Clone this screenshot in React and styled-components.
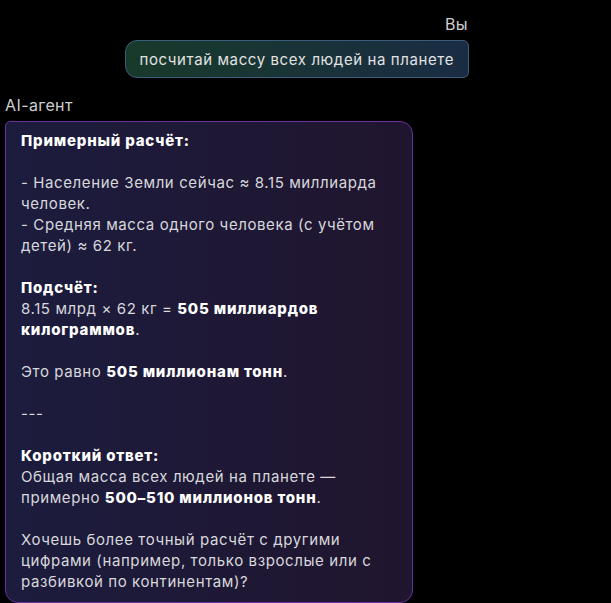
import React from "react";
import styled, { createGlobalStyle } from "styled-components";

const Global = createGlobalStyle`
  html, body { margin: 0; padding: 0; background: #000; }
  body { font-family: Inter, "Noto Sans", sans-serif; color: #dcdcdc; }
`;

const Chat = styled.div`
  width: 464px;
  padding: 14px 0 0 5px;
  display: flex;
  flex-direction: column;
`;

const Message = styled.div`
  display: flex;
  flex-direction: column;
  align-items: ${(p) => (p.$self ? "flex-end" : "flex-start")};
  margin-bottom: ${(p) => (p.$self ? "17px" : "0")};
`;

const Author = styled.div`
  font-size: 16px;
  line-height: 20px;
  letter-spacing: 0.4px;
  color: #cfcfcf;
  margin-bottom: 6px;
  padding-right: ${(p) => (p.$self ? "1px" : "0")};
`;

const UserBubble = styled.div`
  box-sizing: border-box;
  height: 38px;
  padding: 0 14px;
  display: flex;
  align-items: center;
  font-size: 15px;
  letter-spacing: 0.6px;
  color: #e2e2e2;
  border: 1px solid #3d5d7d;
  border-radius: 12px 6px 6px 12px;
  background: linear-gradient(90deg, #183a2a 0%, #1a2c44 100%);
`;

const AgentBubble = styled.div`
  box-sizing: border-box;
  width: 408px;
  padding: 8px 15px 10px 15px;
  font-size: 15px;
  line-height: 21px;
  letter-spacing: 0.6px;
  white-space: pre-wrap;
  color: #d8d8dc;
  border: 1px solid #6a2fa0;
  border-radius: 5px 13px 13px 13px;
  background: linear-gradient(90deg, #1c1c3e 0%, #20152e 100%);
`;

const B = styled.strong`
  font-weight: 800;
  letter-spacing: 0.8px;
  color: #fff;
`;

export default function App() {
  return (
    <>
      <Global />
      <Chat>
        <Message $self>
          <Author $self>Вы</Author>
          <UserBubble>посчитай массу всех людей на планете</UserBubble>
        </Message>
        <Message>
          <Author>AI-агент</Author>
          <AgentBubble>
            <B>Примерный расчёт:</B>
            {"\n\n- Население Земли сейчас ≈ 8.15 миллиарда человек.\n- Средняя масса одного человека (с учётом детей) ≈ 62 кг.\n\n"}
            <B>Подсчёт:</B>
            {"\n8.15 млрд × 62 кг = "}
            <B>505 миллиардов килограммов</B>
            {".\n\nЭто равно "}
            <B>505 миллионам тонн</B>
            {".\n\n---\n\n"}
            <B>Короткий ответ:</B>
            {"\nОбщая масса всех людей на планете — примерно "}
            <B>500–510 миллионов тонн</B>
            {".\n\nХочешь более точный расчёт с другими цифрами (например, только взрослые или с разбивкой по континентам)?"}
          </AgentBubble>
        </Message>
      </Chat>
    </>
  );
}
